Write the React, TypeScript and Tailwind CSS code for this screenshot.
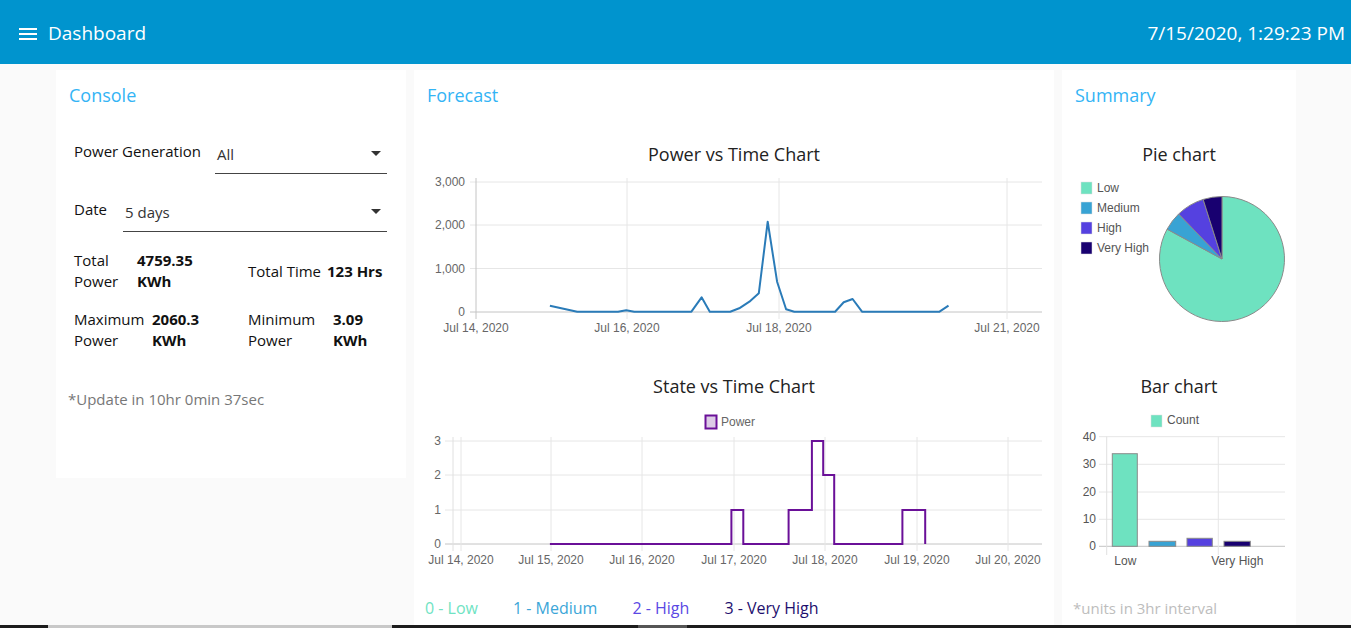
import React from "react";

const UI_FONT = "font-['Open_Sans','Noto_Sans',sans-serif]";
const CHART_FONT = "Liberation Sans, Arial, sans-serif";

const COLORS = {
  low: "#6ee2c0",
  medium: "#38a3d4",
  high: "#5541e0",
  veryHigh: "#180070",
};

// Power vs Time line data (local svg coords)
const powerPoints: [number, number][] = [
  [135.9, 135.7], [163.2, 141.7], [204, 141.7], [212.2, 140.3], [220.3, 141.7],
  [277.4, 141.7], [287.6, 127.3], [295.8, 141.7], [316.2, 141.7], [325.2, 138.3],
  [335.4, 131.7], [344.8, 123.3], [353.7, 51.7], [363.1, 111.7], [372.1, 139.3],
  [380.3, 141.7], [421.1, 141.7], [429.7, 132.3], [438.6, 129], [448, 141.7],
  [525.5, 141.7], [534.5, 135.7],
];

function MenuIcon() {
  return (
    <svg width="24" height="24" viewBox="0 0 24 24" fill="white">
      <path d="M3 18h18v-2H3v2zm0-5h18v-2H3v2zm0-7v2h18V6H3z" />
    </svg>
  );
}

function SelectBox({ value, width }: { value: string; width: string }) {
  return (
    <div className={`relative shrink-0 ${width} h-[33px] pt-[3px] pl-[2px] border-b border-[#444]`}>
      <span className="text-[15px] leading-[21px] text-[#333]">{value}</span>
      <svg className="absolute right-[6px] top-[10px]" width="10" height="5" viewBox="0 0 10 5">
        <path d="M0 0h10L5 5z" fill="#333" />
      </svg>
    </div>
  );
}

function PowerChart() {
  const yTicks = [
    { y: 12, label: "3,000" },
    { y: 55, label: "2,000" },
    { y: 98.5, label: "1,000" },
    { y: 142, label: "0" },
  ];
  const xTicks = [
    { x: 62, label: "Jul 14, 2020" },
    { x: 213, label: "Jul 16, 2020" },
    { x: 365, label: "Jul 18, 2020" },
    { x: 593, label: "Jul 21, 2020" },
  ];
  return (
    <svg width="640" height="175" className="block" fontFamily={CHART_FONT}>
      {yTicks.map((t) => (
        <g key={t.label}>
          <line x1="56" x2="628" y1={t.y} y2={t.y} stroke={t.label === "0" ? "#c4c4c4" : "#e6e6e6"} />
          <text x="51" y={t.y + 4} fontSize="12" fill="#666" textAnchor="end">{t.label}</text>
        </g>
      ))}
      {xTicks.map((t) => (
        <g key={t.label}>
          <line x1={t.x} x2={t.x} y1="8" y2="149" stroke={t.x === 62 ? "#c4c4c4" : "#e6e6e6"} />
          <text x={t.x} y="162" fontSize="12" fill="#666" textAnchor="middle">{t.label}</text>
        </g>
      ))}
      <polyline
        points={powerPoints.map((p) => p.join(",")).join(" ")}
        fill="none"
        stroke="#2a7bb8"
        strokeWidth="2"
        strokeLinejoin="round"
      />
    </svg>
  );
}

function StateChart() {
  const yTicks = [
    { y: 35, label: "3" },
    { y: 69, label: "2" },
    { y: 104, label: "1" },
    { y: 138, label: "0" },
  ];
  const xTicks = [
    { x: 47, label: "Jul 14, 2020" },
    { x: 137, label: "Jul 15, 2020" },
    { x: 228, label: "Jul 16, 2020" },
    { x: 320, label: "Jul 17, 2020" },
    { x: 411, label: "Jul 18, 2020" },
    { x: 503, label: "Jul 19, 2020" },
    { x: 594, label: "Jul 20, 2020" },
  ];
  return (
    <svg width="640" height="166" className="block" fontFamily={CHART_FONT}>
      <rect x="291.5" y="9.5" width="11" height="13" fill="#dccbe6" stroke="#6a1098" strokeWidth="2" />
      <text x="307" y="20" fontSize="12" fill="#666">Power</text>
      {yTicks.map((t) => (
        <g key={t.label}>
          <line x1="31" x2="628" y1={t.y} y2={t.y} stroke={t.label === "0" ? "#c4c4c4" : "#e6e6e6"} />
          <text x="27" y={t.y + 4} fontSize="12" fill="#666" textAnchor="end">{t.label}</text>
        </g>
      ))}
      <line x1="39" x2="39" y1="31" y2="145" stroke="#e0e0e0" />
      {xTicks.map((t) => (
        <g key={t.label}>
          <line x1={t.x} x2={t.x} y1="31" y2="145" stroke="#e6e6e6" />
          <text x={t.x} y="158" fontSize="12" fill="#666" textAnchor="middle">{t.label}</text>
        </g>
      ))}
      <path
        d="M135.9,138 H317.4 V104 H329.3 V138 H374.6 V104 H397.9 V35 H409.2 V69 H420.2 V138 H488.4 V104 H511.2 V138"
        fill="none"
        stroke="#6a1098"
        strokeWidth="2"
      />
    </svg>
  );
}

function PieChart() {
  const data = [
    { label: "Low", value: 34, color: COLORS.low },
    { label: "Medium", value: 2, color: COLORS.medium },
    { label: "High", value: 3, color: COLORS.high },
    { label: "Very High", value: 2, color: COLORS.veryHigh },
  ];
  const total = data.reduce((s, d) => s + d.value, 0);
  const cx = 160;
  const cy = 89;
  const r = 62.5;
  let angle = -Math.PI / 2;
  const slices = data.map((d) => {
    const start = angle;
    const end = angle + (d.value / total) * Math.PI * 2;
    angle = end;
    const x1 = cx + r * Math.cos(start);
    const y1 = cy + r * Math.sin(start);
    const x2 = cx + r * Math.cos(end);
    const y2 = cy + r * Math.sin(end);
    const large = end - start > Math.PI ? 1 : 0;
    return { ...d, path: `M${cx},${cy} L${x1},${y1} A${r},${r} 0 ${large} 1 ${x2},${y2} Z` };
  });
  return (
    <svg width="234" height="160" className="block" fontFamily={CHART_FONT}>
      {data.map((d, i) => (
        <g key={d.label}>
          <rect x="19" y={12 + i * 20} width="11" height="12" fill={d.color} stroke="#ddd" strokeWidth="0.5" />
          <text x="35" y={22 + i * 20} fontSize="12" fill="#555">{d.label}</text>
        </g>
      ))}
      {slices.map((s) => (
        <path key={s.label} d={s.path} fill={s.color} stroke="#8a8a8a" strokeWidth="1" />
      ))}
    </svg>
  );
}

function BarChart() {
  const yTicks = [
    { y: 30.7, label: "40" },
    { y: 58.3, label: "30" },
    { y: 86, label: "20" },
    { y: 113.3, label: "10" },
    { y: 140.3, label: "0" },
  ];
  const bars = [
    { x: 50.3, w: 25, top: 47.7, color: COLORS.low },
    { x: 87, w: 26.7, top: 135.3, color: COLORS.medium },
    { x: 125, w: 25.3, top: 132.3, color: COLORS.high },
    { x: 162, w: 26.3, top: 135.3, color: COLORS.veryHigh },
  ];
  return (
    <svg width="234" height="166" className="block" fontFamily={CHART_FONT}>
      <rect x="89" y="9" width="11" height="12" fill={COLORS.low} stroke="#ddd" strokeWidth="0.5" />
      <text x="105" y="18" fontSize="12" fill="#555">Count</text>
      {yTicks.map((t) => (
        <g key={t.label}>
          <line x1="37" x2="223" y1={t.y} y2={t.y} stroke={t.label === "0" ? "#c4c4c4" : "#e6e6e6"} />
          <text x="34" y={t.y + 4} fontSize="12" fill="#555" textAnchor="end">{t.label}</text>
        </g>
      ))}
      <line x1="44.7" x2="44.7" y1="30.7" y2="149" stroke="#e0e0e0" />
      <line x1="156.3" x2="156.3" y1="30.7" y2="149" stroke="#e6e6e6" />
      {bars.map((b, i) => (
        <rect key={i} x={b.x} y={b.top} width={b.w} height={140.3 - b.top} fill={b.color} stroke="#8a8a8a" strokeWidth="1" />
      ))}
      <text x="63.3" y="159" fontSize="12" fill="#555" textAnchor="middle">Low</text>
      <text x="175.3" y="159" fontSize="12" fill="#555" textAnchor="middle">Very High</text>
    </svg>
  );
}

function CardTitle({ children }: { children: React.ReactNode }) {
  return (
    <div className="pt-[14px] px-[13px] h-[38px] text-[18px] leading-[22px] text-[#33b4f5]">{children}</div>
  );
}

function ChartTitle({ children, className = "" }: { children: React.ReactNode; className?: string }) {
  return <div className={`h-6 text-center text-[18px] leading-[24px] text-[#222] ${className}`}>{children}</div>;
}

export default function App() {
  return (
    <div className={`relative h-[628px] overflow-hidden bg-[#fafafa] ${UI_FONT}`}>
      {/* Top bar */}
      <header className="flex items-center h-16 pt-[3px] bg-[#0094ce] text-white pl-4 pr-[6px]">
        <MenuIcon />
        <span className="ml-[8px] text-[19px]">Dashboard</span>
        <span className="ml-auto text-[19px]">7/15/2020, 1:29:23 PM</span>
      </header>

      <div className="flex items-start gap-2 pl-[56px] pt-[6px]">
        {/* Console */}
        <section className="w-[350px] h-[408px] bg-white">
          <CardTitle>Console</CardTitle>
          <div className="text-[15px] leading-[21px] text-[#111]">
            <div className="flex mt-[33px] pl-[18px] pr-[19px]">
              <span className="whitespace-nowrap">Power Generation</span>
              <SelectBox value="All" width="w-[172px] ml-auto" />
            </div>
            <div className="flex mt-[25px] pl-[18px] pr-[19px]">
              <span>Date</span>
              <SelectBox value="5 days" width="w-[264px] ml-auto" />
            </div>
            <div className="grid grid-cols-[174px_1fr] mt-[18px] pl-[18px]">
              <div className="flex">
                <span className="w-[63px]">Total Power</span>
                <span className="font-bold w-[70px]">4759.35 KWh</span>
              </div>
              <div className="flex items-center gap-[6px]">
                <span>Total Time</span>
                <span className="font-bold">123 Hrs</span>
              </div>
            </div>
            <div className="grid grid-cols-[174px_1fr] mt-[17px] pl-[18px]">
              <div className="flex">
                <span className="w-[78px]">Maximum Power</span>
                <span className="font-bold w-[56px]">2060.3 KWh</span>
              </div>
              <div className="flex">
                <span className="w-[85px]">Minimum Power</span>
                <span className="font-bold w-[40px]">3.09 KWh</span>
              </div>
            </div>
            <div className="mt-[38px] pl-[12px] text-[#777]">*Update in 10hr 0min 37sec</div>
          </div>
        </section>

        {/* Forecast */}
        <section className="w-[640px] h-[560px] bg-white">
          <CardTitle>Forecast</CardTitle>
          <ChartTitle className="mt-[34px]">Power vs Time Chart</ChartTitle>
          <div className="mt-[4px]">
            <PowerChart />
          </div>
          <ChartTitle className="mt-[29px]">State vs Time Chart</ChartTitle>
          <div className="mt-[8px]">
            <StateChart />
          </div>
          <div className="flex gap-[35px] pl-[11px] mt-[26px] text-[16px] leading-[20px]">
            <span className="text-[#6fe3c3]">0 - Low</span>
            <span className="text-[#3ca6d8]">1 - Medium</span>
            <span className="text-[#5a48e4]">2 - High</span>
            <span className="text-[#1d0f6e]">3 - Very High</span>
          </div>
        </section>

        {/* Summary */}
        <section className="w-[234px] h-[560px] bg-white">
          <CardTitle>Summary</CardTitle>
          <ChartTitle className="mt-[34px]">Pie chart</ChartTitle>
          <div className="mt-[4px]">
            <PieChart />
          </div>
          <ChartTitle className="mt-[44px]">Bar chart</ChartTitle>
          <div className="mt-[8px]">
            <BarChart />
          </div>
          <div className="pl-[11px] mt-[26px] text-[15px] leading-[20px] text-[#bdbdbd]">*units in 3hr interval</div>
        </section>
      </div>

      {/* window scrollbar strip */}
      <div className="absolute bottom-0 left-0 w-full h-[3px] bg-[#1c1c1c]">
        <div className="absolute left-[48px] w-[344px] h-full bg-[#c8c8c8]" />
        <div className="absolute left-[638px] w-[49px] h-full bg-[#555]" />
      </div>
    </div>
  );
}
